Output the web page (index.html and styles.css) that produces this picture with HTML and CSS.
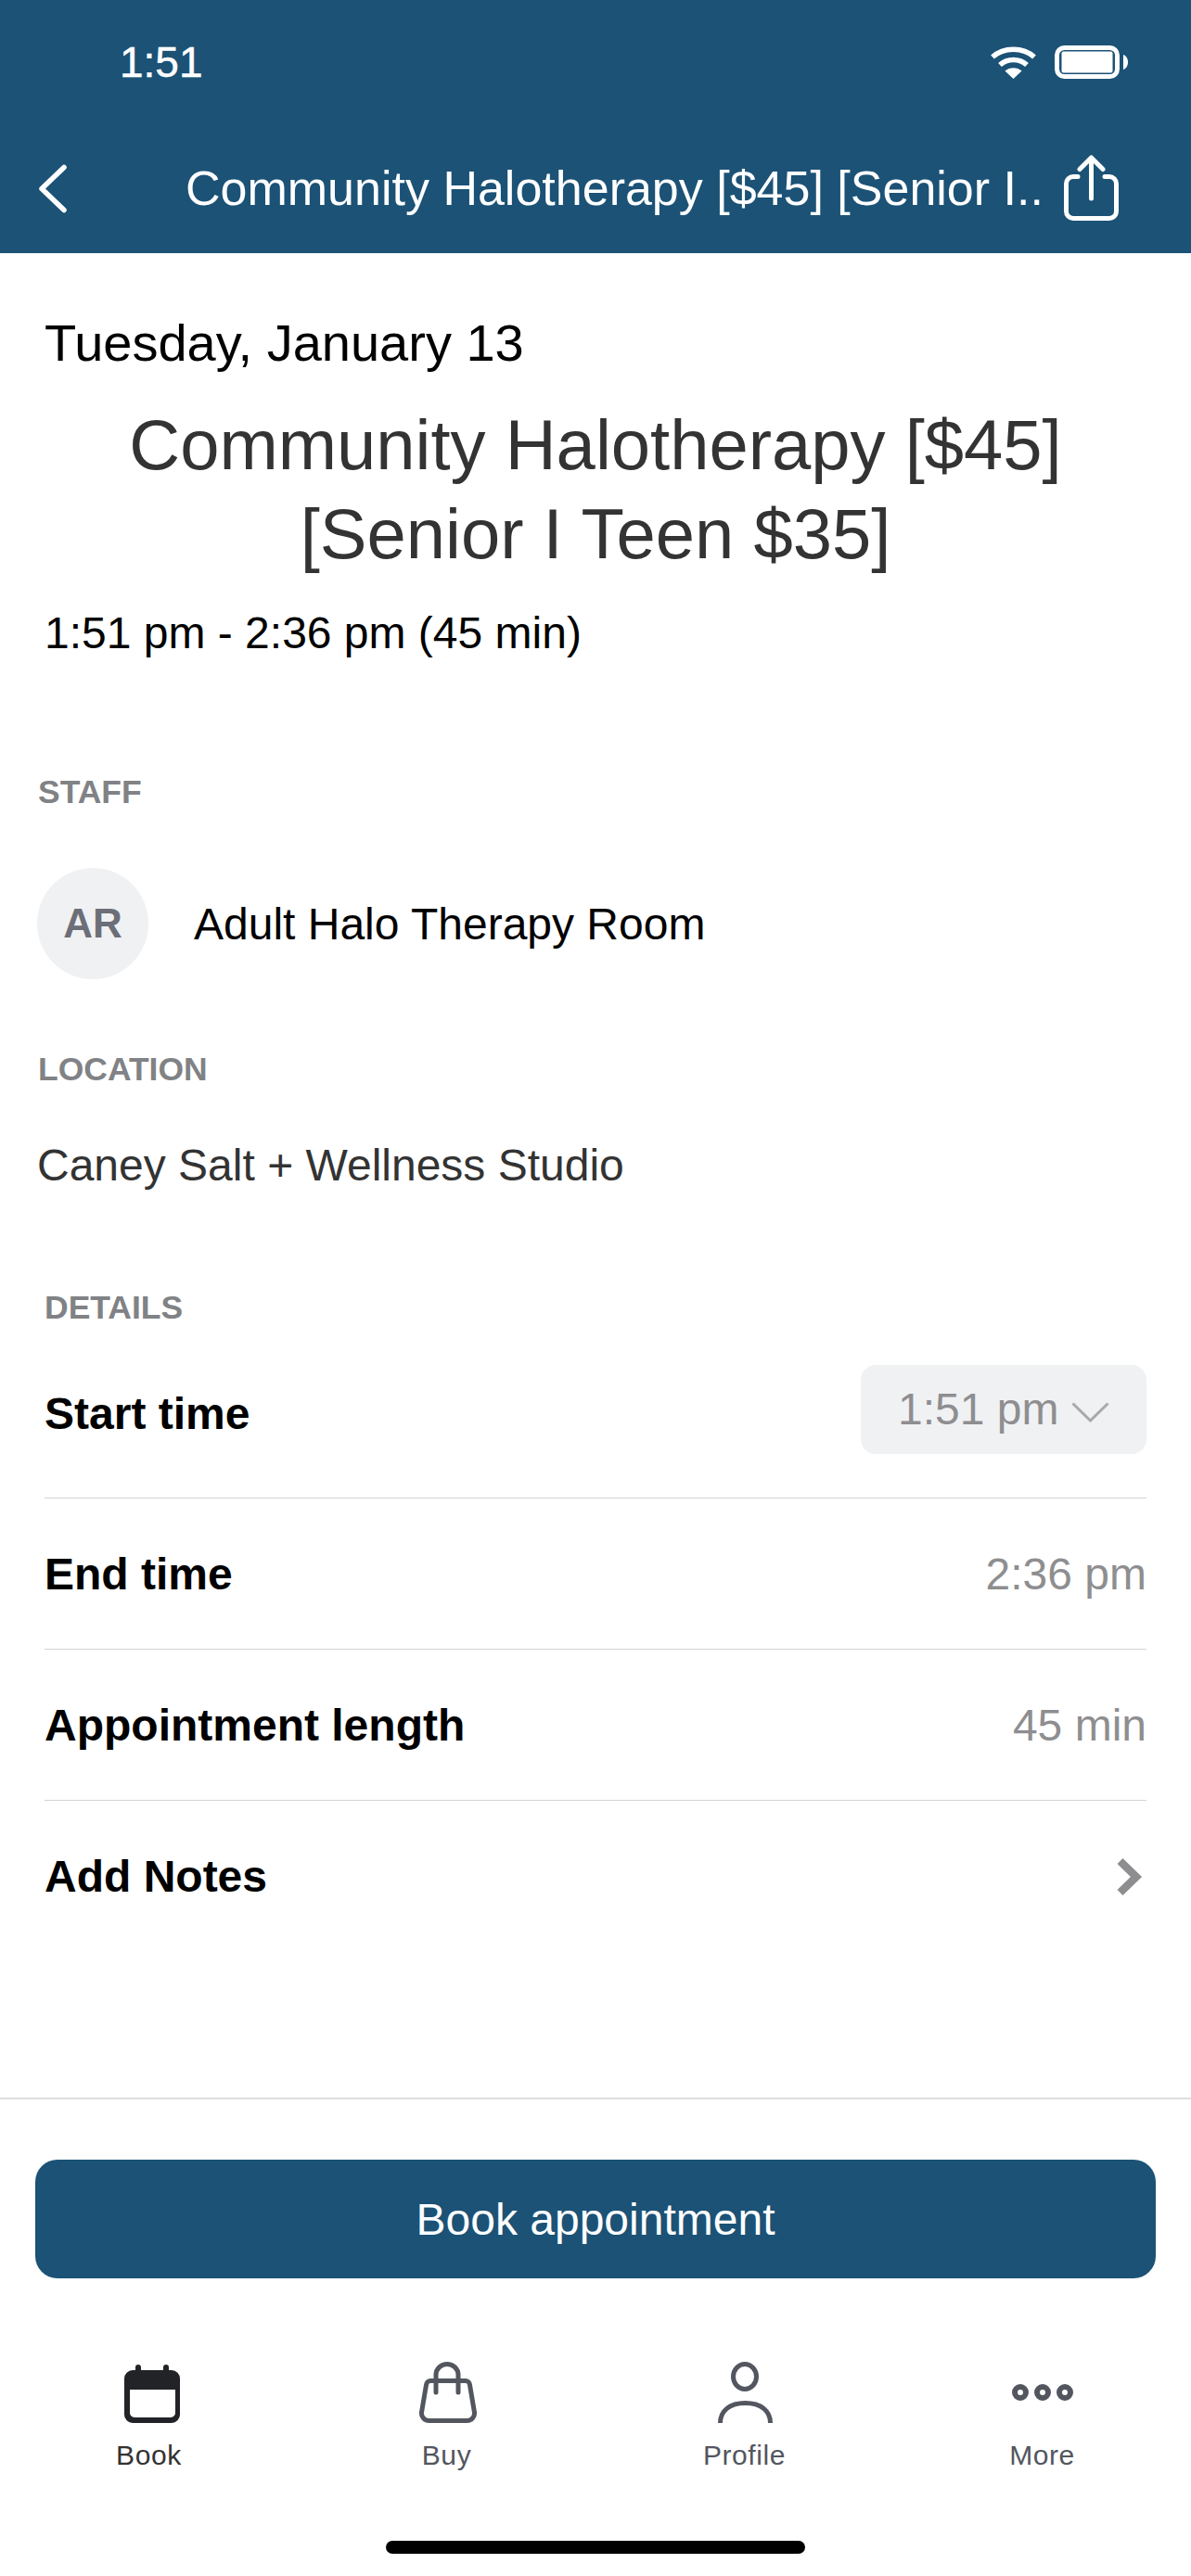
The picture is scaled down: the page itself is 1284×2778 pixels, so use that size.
FILE: index.html
```html
<!DOCTYPE html>
<html lang="en">
<head>
<meta charset="utf-8">
<title>Book appointment</title>
<link rel="stylesheet" href="styles.css">
</head>
<body>
<div class="screen">
  <header class="header">
    <div class="status">
      <span class="clock">1:51</span>
      <svg class="wifi" viewBox="0 0 49 36" aria-hidden="true">
        <path d="M2 12.5C14 1.5 35 1.5 47 12.5" fill="none" stroke="#fff" stroke-width="5.5"/>
        <path d="M10 21C18 13.5 31 13.5 39 21" fill="none" stroke="#fff" stroke-width="5.5"/>
        <path d="M24.5 36L15.5 27.5C20 23 29 23 33.5 27.5Z" fill="#fff"/>
      </svg>
      <svg class="battery" viewBox="0 0 79 36" aria-hidden="true">
        <rect x="2.5" y="2.5" width="65" height="31" rx="8" fill="none" stroke="#fff" stroke-width="5"/>
        <rect x="7.5" y="6.5" width="55" height="23" rx="2" fill="#fff"/>
        <path d="M74 10C77 11 79 14 79 18C79 22 77 25 74 26Z" fill="#fff"/>
      </svg>
    </div>
    <nav class="nav">
      <svg class="back" viewBox="0 0 31 53" aria-hidden="true">
        <path d="M28 3.5L4 26.5L28 49.5" fill="none" stroke="#fff" stroke-width="5.5" stroke-linecap="round" stroke-linejoin="round"/>
      </svg>
      <span class="nav-title">Community Halotherapy [$45] [Senior I..</span>
      <svg class="share" viewBox="0 0 60 72" aria-hidden="true">
        <path d="M15 23.5H10a7.5 7.5 0 0 0-7.5 7.5V61a7.5 7.5 0 0 0 7.5 7.5H49a7.5 7.5 0 0 0 7.5-7.5V31a7.5 7.5 0 0 0-7.5-7.5H44" fill="none" stroke="#fff" stroke-width="5" stroke-linecap="round"/>
        <path d="M29.5 47V3M17 15.5L29.5 3L42 15.5" fill="none" stroke="#fff" stroke-width="5" stroke-linecap="round" stroke-linejoin="round"/>
      </svg>
    </nav>
  </header>

  <main class="content">
    <p class="date">Tuesday, January 13</p>
    <h1 class="class-name">Community Halotherapy [$45]<br>[Senior I Teen $35]</h1>
    <p class="time-range">1:51 pm - 2:36 pm (45 min)</p>

    <h2 class="section-label staff-label">STAFF</h2>
    <div class="staff">
      <div class="avatar">AR</div>
      <span class="staff-name">Adult Halo Therapy Room</span>
    </div>

    <h2 class="section-label location-label">LOCATION</h2>
    <p class="location">Caney Salt + Wellness Studio</p>

    <h2 class="section-label details-label">DETAILS</h2>
    <div class="rows">
      <div class="row row-first">
        <span class="row-name row-name-low">Start time</span>
        <div class="select">
          <span>1:51 pm</span>
          <svg class="select-arrow" viewBox="0 0 41 22" aria-hidden="true">
            <path d="M1.5 1.5L20.5 20L39.5 1.5" fill="none" stroke="#a9a9ab" stroke-width="3"/>
          </svg>
        </div>
      </div>
      <div class="row">
        <span class="row-name">End time</span>
        <span class="row-value">2:36 pm</span>
      </div>
      <div class="row">
        <span class="row-name">Appointment length</span>
        <span class="row-value">45 min</span>
      </div>
      <div class="row row-last">
        <span class="row-name">Add Notes</span>
        <svg class="row-arrow" viewBox="0 0 28 42" aria-hidden="true">
          <path d="M3.5 4L21 21L3.5 38" fill="none" stroke="#8e8e90" stroke-width="8.5" stroke-linejoin="miter"/>
        </svg>
      </div>
    </div>
  </main>

  <footer class="footer">
    <button class="book" type="button">Book appointment</button>
    <div class="tabs">
      <div class="tab tab-active">
        <svg class="tab-icon" viewBox="0 0 66 66" aria-hidden="true">
          <path d="M18 9V6a3 3 0 0 1 6 0V9M48 9V6a3 3 0 0 1 6 0V9" fill="#222326"/>
          <path d="M15 9H57a9 9 0 0 1 9 9V57a9 9 0 0 1-9 9H15a9 9 0 0 1-9-9V18a9 9 0 0 1 9-9ZM12 30V55a5 5 0 0 0 5 5H56a5 5 0 0 0 5-5V30Z" fill="#222326" fill-rule="evenodd"/>
        </svg>
        <span class="tab-label">Book</span>
      </div>
      <div class="tab">
        <svg class="tab-icon" viewBox="0 0 66 66" aria-hidden="true">
          <path d="M15 20.5H53a4.5 4.5 0 0 1 4.4 3.8L62.4 54a8 8 0 0 1-8 9.5H13.6a8 8 0 0 1-8-9.5L10.6 24.3a4.5 4.5 0 0 1 4.4-3.8Z" fill="none" stroke="#53565f" stroke-width="5"/>
          <path d="M21 33V14a12 11.5 0 0 1 24 0V33" fill="none" stroke="#53565f" stroke-width="5" stroke-linecap="round"/>
        </svg>
        <span class="tab-label">Buy</span>
      </div>
      <div class="tab">
        <svg class="tab-icon" viewBox="0 0 66 66" aria-hidden="true">
          <ellipse cx="33" cy="16" rx="12.5" ry="13.5" fill="none" stroke="#53565f" stroke-width="5"/>
          <path d="M6.5 66c0-13 10-21.5 27-21.5s27 8.5 27 21.5" fill="none" stroke="#53565f" stroke-width="5"/>
        </svg>
        <span class="tab-label">Profile</span>
      </div>
      <div class="tab">
        <svg class="tab-icon" viewBox="0 0 66 66" aria-hidden="true">
          <circle cx="9" cy="33" r="6" fill="none" stroke="#53565f" stroke-width="6"/>
          <circle cx="33" cy="33" r="6" fill="none" stroke="#53565f" stroke-width="6"/>
          <circle cx="57" cy="33" r="6" fill="none" stroke="#53565f" stroke-width="6"/>
        </svg>
        <span class="tab-label">More</span>
      </div>
    </div>
    <div class="home-bar"></div>
  </footer>
</div>
</body>
</html>
```

FILE: styles.css
```css
* {
  box-sizing: border-box;
}

html,
body {
  margin: 0;
  padding: 0;
  background: #fff;
}

body {
  font-family: "Liberation Sans", Arial, sans-serif;
  color: #000;
}

p,
h1,
h2 {
  margin: 0;
  font-weight: 400;
}

.screen {
  display: flex;
  flex-direction: column;
  width: 1284px;
  height: 2778px;
  overflow: hidden;
}

/* Header: status bar and navigation */
.header {
  display: flex;
  flex-direction: column;
  height: 273px;
  flex: none;
  background: #1b5276;
  color: #fff;
}

.status {
  display: flex;
  align-items: center;
  height: 134px;
  padding: 0 68px 0 129px;
  flex: none;
}

.clock {
  font-size: 46px;
  margin-right: auto;
  -webkit-text-stroke: 0.5px #fff;
}

.wifi {
  width: 49px;
  height: 36px;
  margin-right: 20px;
}

.battery {
  width: 79px;
  height: 36px;
}

.nav {
  display: flex;
  align-items: center;
  height: 130px;
  margin-top: 4px;
  padding: 0 77px 0 41px;
}

.back {
  width: 31px;
  height: 53px;
  flex: none;
}

.nav-title {
  margin-left: 128px;
  font-size: 52px;
  white-space: nowrap;
}

.share {
  width: 60px;
  height: 72px;
  margin-left: auto;
  flex: none;
}

.content {
  flex: 1;
  padding-top: 65px;
}

.date {
  margin-left: 48px;
  font-size: 56px;
  line-height: 64px;
}

.class-name {
  margin: 30px 48px 0;
  font-size: 76px;
  line-height: 96px;
  text-align: center;
  color: #333;
}

.time-range {
  margin: 31px 0 0 48px;
  font-size: 48px;
  line-height: 56px;
}

.section-label {
  font-size: 35.5px;
  font-weight: 700;
  line-height: 40px;
  color: #808285;
}

.staff-label {
  margin: 123px 0 0 41px;
}

.staff {
  display: flex;
  align-items: center;
  margin: 62px 0 0 40px;
}

.avatar {
  display: flex;
  align-items: center;
  justify-content: center;
  width: 120px;
  height: 120px;
  border-radius: 50%;
  background: #f0f1f3;
  color: #6c6f78;
  font-size: 44px;
  font-weight: 700;
}

.staff-name {
  margin-left: 49px;
  font-size: 48px;
}

.location-label {
  margin: 77px 0 0 41px;
}

.location {
  margin: 56px 0 0 40px;
  font-size: 48px;
  line-height: 56px;
  color: #333;
}

.details-label {
  margin: 105px 0 0 48px;
}

.rows {
  margin: 0 48px;
}

.row {
  display: flex;
  align-items: center;
  justify-content: space-between;
  height: 163px;
  border-bottom: 1px solid #d4d4d6;
}

.row-first {
  height: 186px;
  padding: 42px 0 48px;
}

.row-last {
  border-bottom: 0;
}

.row-name {
  font-size: 48px;
  font-weight: 700;
}

.row-name-low {
  margin-top: 10px;
}

.row-value {
  font-size: 48px;
  color: #8e8e90;
}

.select {
  display: flex;
  align-items: center;
  width: 308px;
  height: 96px;
  padding-left: 40px;
  border-radius: 16px;
  background: #f0f1f3;
  font-size: 48px;
  color: #8e8e90;
}

.select-arrow {
  width: 41px;
  height: 22px;
  margin: 6px 0 0 14px;
}

.row-arrow {
  width: 28px;
  height: 42px;
  margin-right: 4px;
}

/* Footer: booking action and tab bar */
.footer {
  flex: none;
  height: 516px;
  padding-top: 65px;
  border-top: 2px solid #dedede;
}

.book {
  display: block;
  width: 1208px;
  height: 128px;
  margin: 0 38px;
  padding: 0;
  border: 0;
  border-radius: 24px;
  background: #1b5276;
  color: #fff;
  font-family: inherit;
  font-size: 48px;
}

.tabs {
  display: grid;
  grid-template-columns: repeat(4, 321px);
  margin-top: 90px;
}

.tab {
  display: flex;
  flex-direction: column;
  align-items: center;
  gap: 17px;
  color: #53565f;
}

.tab-active {
  color: #333;
}

.tab-icon {
  width: 66px;
  height: 66px;
  overflow: visible;
}

.tab-label {
  font-size: 30px;
  line-height: 36px;
  letter-spacing: 0.6px;
}

.home-bar {
  width: 452px;
  height: 14px;
  margin: 74px auto 0;
  border-radius: 7px;
  background: #000;
}
```
